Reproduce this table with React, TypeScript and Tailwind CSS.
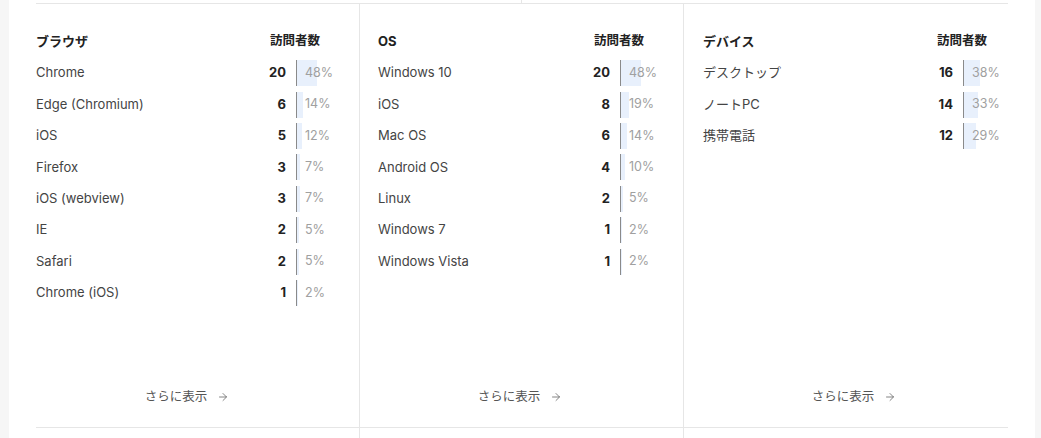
import React from "react";
import { ArrowRight } from "lucide-react";

type Row = { name: string; count: number; pct: number };

const browsers: Row[] = [
  { name: "Chrome", count: 20, pct: 48 },
  { name: "Edge (Chromium)", count: 6, pct: 14 },
  { name: "iOS", count: 5, pct: 12 },
  { name: "Firefox", count: 3, pct: 7 },
  { name: "iOS (webview)", count: 3, pct: 7 },
  { name: "IE", count: 2, pct: 5 },
  { name: "Safari", count: 2, pct: 5 },
  { name: "Chrome (iOS)", count: 1, pct: 2 },
];

const oses: Row[] = [
  { name: "Windows 10", count: 20, pct: 48 },
  { name: "iOS", count: 8, pct: 19 },
  { name: "Mac OS", count: 6, pct: 14 },
  { name: "Android OS", count: 4, pct: 10 },
  { name: "Linux", count: 2, pct: 5 },
  { name: "Windows 7", count: 1, pct: 2 },
  { name: "Windows Vista", count: 1, pct: 2 },
];

const devices: Row[] = [
  { name: "デスクトップ", count: 16, pct: 38 },
  { name: "ノートPC", count: 14, pct: 33 },
  { name: "携帯電話", count: 12, pct: 29 },
];

const StatColumn = ({
  title,
  rows,
  className,
}: {
  title: string;
  rows: Row[];
  className: string;
}) => {
  return (
    <div className={`flex flex-col pt-[22px] pb-[20px] ${className}`}>
      {/* header */}
      <div className="flex items-center h-[31.4px]">
        <div className="flex-1 text-[13px] font-bold text-[#222]">{title}</div>
        <div className="w-[92px] pl-[24px] text-[12.5px] font-bold text-[#222] whitespace-nowrap">
          訪問者数
        </div>
      </div>
      {rows.map((r) => (
        <div key={r.name} className="flex items-center h-[31.43px]">
          <div className="flex-1 text-[13px] text-[#444]">{r.name}</div>
          <div className="w-[40px] text-right text-[13px] font-bold text-[#222]">
            {r.count}
          </div>
          <div className="relative ml-[10px] w-[42px] h-[26px] border-l border-[#8a8a8a] flex items-center">
            <div
              className="absolute left-0 top-0 h-full bg-[#e8f0fc]"
              style={{ width: `${r.pct}%` }}
            />
            <span className="relative pl-[8px] text-[12.5px] text-[#a0a0a0]">
              {r.pct}%
            </span>
          </div>
        </div>
      ))}
      <div className="mt-auto flex items-center justify-center gap-[10px] h-[20px] text-[12.5px] text-[#555]">
        <span>さらに表示</span>
        <ArrowRight size={12} strokeWidth={1.6} className="text-[#666]" />
      </div>
    </div>
  );
};

export default function App() {
  return (
    <div
      className="w-[1041px] h-[438px] bg-[#f6f6f6] pl-[9px] pr-[6px] overflow-hidden"
      style={{ fontFamily: 'Inter, "Noto Sans CJK JP", sans-serif' }}
    >
      <div className="h-full bg-white px-[27px]">
        {/* previous section tail */}
        <div className="grid grid-cols-2 h-[3px]">
          <div className="border-r border-[#e6e6e6]" />
          <div />
        </div>
        {/* stats section */}
        <div className="grid grid-cols-3 h-[425px] border-y border-[#e6e6e6]">
          <StatColumn
            title="ブラウザ"
            rows={browsers}
            className="pr-[21px] border-r border-[#e6e6e6]"
          />
          <StatColumn
            title="OS"
            rows={oses}
            className="pl-[18px] pr-[21px] border-r border-[#e6e6e6]"
          />
          <StatColumn title="デバイス" rows={devices} className="pl-[19px] pr-[3px]" />
        </div>
        {/* next section head */}
        <div className="grid grid-cols-3 h-[20px]">
          <div className="border-r border-[#e6e6e6]" />
          <div className="border-r border-[#e6e6e6]" />
          <div />
        </div>
      </div>
    </div>
  );
}
